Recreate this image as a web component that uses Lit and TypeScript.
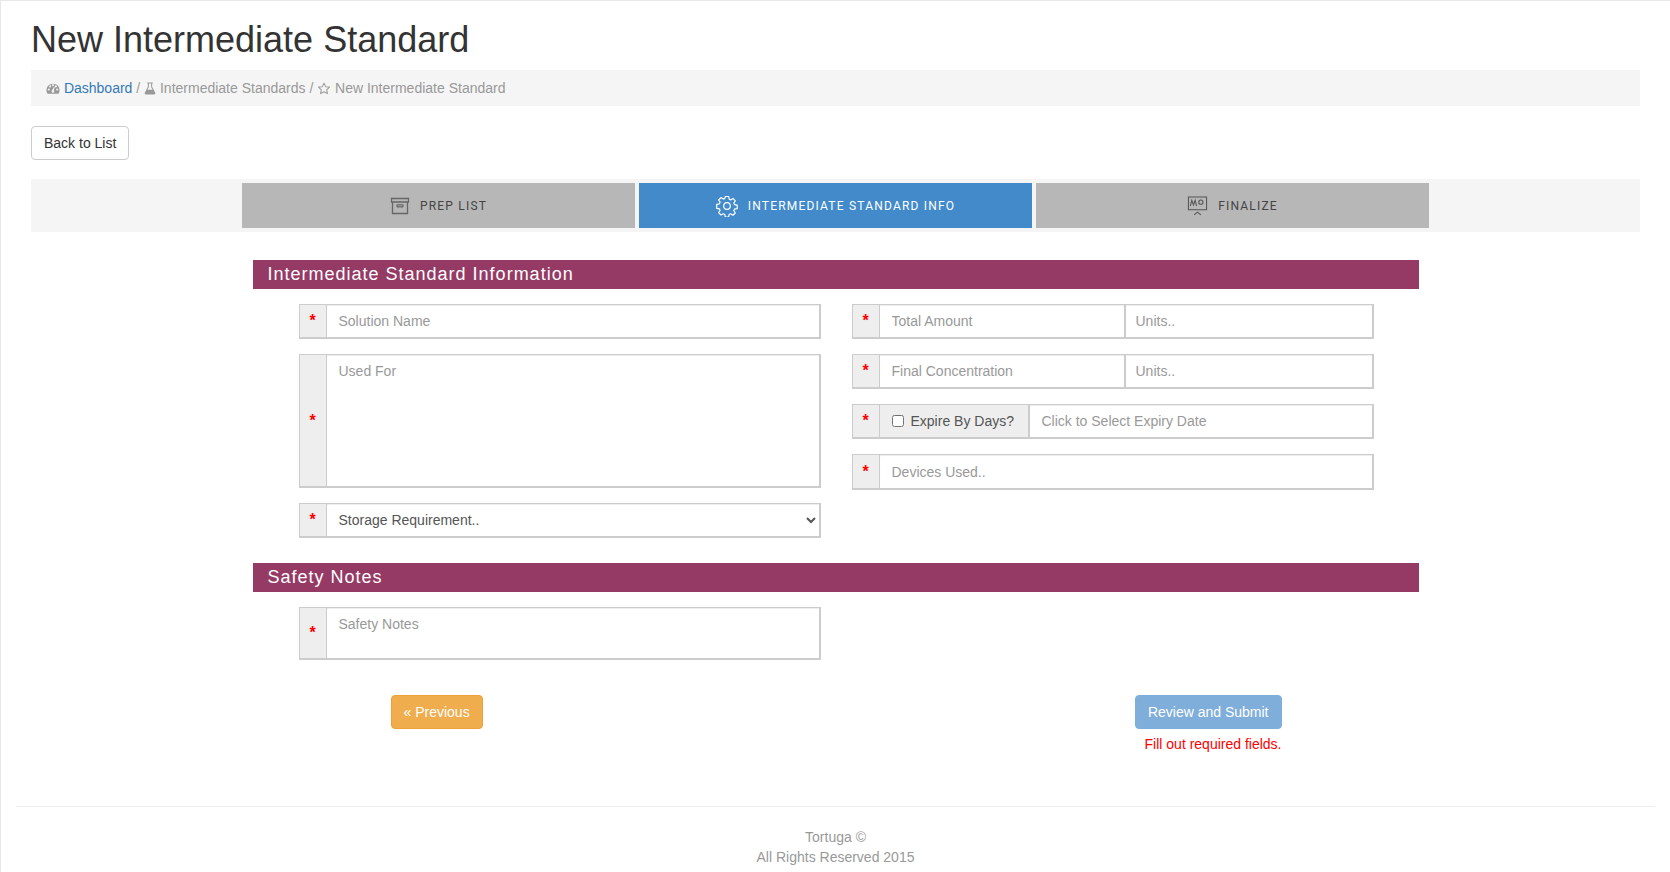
import { LitElement, css, html } from "lit";
import { customElement } from "lit/decorators.js";

const gaugeIcon = html`<svg class="crumb-icon" viewBox="0 0 16 14" width="14" height="13">
  <path fill="#999" fill-rule="evenodd" d="M8 1.5a7.5 7.5 0 0 0-6.6 11c.2.4.6.6 1 .6h11.2c.4 0 .8-.2 1-.6A7.5 7.5 0 0 0 8 1.500zM3.200 9.300a1.200 1.200 0 1 1 0-2.400 1.200 1.200 0 0 1 0 2.400zm1.600-3.500a1.200 1.200 0 1 1 0-2.400 1.200 1.200 0 0 1 0 2.400zM8 4.300a1.200 1.200 0 1 1 0-2.400 1.200 1.200 0 0 1 0 2.400zm3.200 1.500a1.200 1.200 0 1 1 0-2.400 1.200 1.200 0 0 1 0 2.400zm1.600 3.500a1.200 1.200 0 1 1 0-2.400 1.200 1.200 0 0 1 0 2.400zM9.500 10.500a1.600 1.600 0 1 1-2.300-1.700l1.900-3.800.8.300-1 4.100c.3.200.5.600.6 1.100z"/>
</svg>`;

const flaskIcon = html`<svg class="crumb-icon" viewBox="0 0 12 14" width="12" height="13">
  <path fill="#999" fill-rule="evenodd" d="M3 .5h6v1.200H8.300v3.500l3.300 6.500c.4.900-.1 1.800-1.100 1.800H1.500c-1 0-1.500-.9-1.100-1.800l3.300-6.500V1.700H3zm1.800 1.200v3.800L3.300 8.400h5.400L7.200 5.500V1.700z"/>
</svg>`;

const starIcon = html`<svg class="crumb-icon" viewBox="0 0 14 14" width="14" height="13">
  <path fill="none" stroke="#999" stroke-width="1.100" stroke-linejoin="round" d="M7 1.200l1.800 3.800 4.100.5-3 2.900.8 4.100L7 10.500l-3.700 2 .8-4.100-3-2.900 4.100-.5z"/>
</svg>`;

const boxIcon = html`<svg viewBox="0 0 20 20" width="20" height="20" fill="none" stroke="#666" stroke-width="1.300">
  <path d="M1.500 2.500h17v3.500h-17z"/>
  <path d="M2.500 6v11.500h15V6"/>
  <rect x="7" y="8.800" width="6" height="2" rx=".5"/>
</svg>`;

const gearIcon = html`<svg viewBox="0 0 22 22" width="22" height="22" fill="none" stroke="#fff" stroke-width="1.200" stroke-linejoin="round">
  <path d="M9.300 1.500h3.400l.5 2.700 1.500.7 2.300-1.500 2.300 2.400-1.500 2.200.7 1.600 2.700.6v3.400l-2.700.5-.7 1.600 1.500 2.300-2.400 2.300-2.200-1.500-1.600.7-.5 2.700H9.300l-.5-2.700-1.600-.7L5 20l-2.400-2.400 1.500-2.200-.7-1.600-2.700-.5V9.400l2.700-.6.700-1.600L2.600 5 5 2.600l2.200 1.500 1.600-.7z"/>
  <circle cx="11" cy="11" r="3.300"/>
</svg>`;

const boardIcon = html`<svg viewBox="0 0 22 22" width="21" height="21" fill="none" stroke="#555" stroke-width="1.100">
  <path d="M1.500 2h19v13.500h-19z"/>
  <path d="M3.500 11.500l1.500-6 1.800 5 1.700-5 1.500 6"/>
  <circle cx="14.500" cy="7.500" r="2.200"/>
  <path d="M11 17.500v1.200M11 18l-3.500 2.800M11 18l3.500 2.800"/>
</svg>`;

@customElement("app-root")
export class AppRoot extends LitElement {
  private required() {
    return html`<span class="addon req">*</span>`;
  }

  override render() {
    return html`
      <main class="page">
        <h1>New Intermediate Standard</h1>

        <div class="breadcrumb">
          ${gaugeIcon} <a href="#">Dashboard</a> <span>/</span> ${flaskIcon}
          <span>Intermediate Standards</span> <span>/</span> ${starIcon}
          <span>New Intermediate Standard</span>
        </div>

        <button class="btn back">Back to List</button>

        <nav class="tabs">
          <div class="tab">${boxIcon}<span>Prep List</span></div>
          <div class="tab active">${gearIcon}<span>Intermediate Standard Info</span></div>
          <div class="tab">${boardIcon}<span>Finalize</span></div>
        </nav>

        <section class="form">
          <h2>Intermediate Standard Information</h2>
          <div class="cols">
            <div class="col">
              <div class="group">
                ${this.required()}
                <input class="grow" placeholder="Solution Name" />
              </div>
              <div class="group">
                ${this.required()}
                <textarea class="grow used" placeholder="Used For"></textarea>
              </div>
              <div class="group">
                ${this.required()}
                <select class="grow">
                  <option>Storage Requirement..</option>
                </select>
              </div>
            </div>
            <div class="col">
              <div class="group">
                ${this.required()}
                <input class="half" placeholder="Total Amount" />
                <input class="units" placeholder="Units.." />
              </div>
              <div class="group">
                ${this.required()}
                <input class="half" placeholder="Final Concentration" />
                <input class="units" placeholder="Units.." />
              </div>
              <div class="group">
                ${this.required()}
                <label class="addon expire"><input type="checkbox" />Expire By Days?</label>
                <input class="grow date" placeholder="Click to Select Expiry Date" />
              </div>
              <div class="group tall">
                ${this.required()}
                <input class="grow" placeholder="Devices Used.." />
              </div>
            </div>
          </div>

          <h2 class="second">Safety Notes</h2>
          <div class="cols">
            <div class="col">
              <div class="group">
                ${this.required()}
                <textarea class="grow notes" placeholder="Safety Notes"></textarea>
              </div>
            </div>
          </div>

          <div class="cols actions">
            <div><button class="btn prev">« Previous</button></div>
            <div class="submit">
              <button class="btn review">Review and Submit</button>
              <span class="error">Fill out required fields.</span>
            </div>
          </div>
        </section>

        <footer>
          <div>Tortuga ©</div>
          <div>All Rights Reserved 2015</div>
        </footer>
      </main>
    `;
  }

  static override styles = css`
    :host {
      display: block;
      font-family: "Liberation Sans", Arial, sans-serif;
      font-size: 14px;
      line-height: 20px;
      color: #333333;
    }

    * {
      box-sizing: border-box;
    }

    .page {
      height: 872px;
      overflow: hidden;
      padding: 0 30px;
      background: #ffffff;
      border-top: 1px solid #e7e7e7;
      border-left: 1px solid #e7e7e7;
    }

    h1 {
      margin: 19px 0 10px;
      font-size: 36px;
      font-weight: 400;
      line-height: 40px;
    }

    .breadcrumb {
      height: 36px;
      margin-bottom: 20px;
      padding: 8px 15px;
      background: #f5f5f5;
      color: #999999;
    }

    .breadcrumb a {
      color: #337ab7;
      text-decoration: none;
    }

    .crumb-icon {
      vertical-align: -2px;
    }

    .btn {
      display: block;
      height: 34px;
      padding: 6px 12px;
      font: inherit;
      border: 1px solid #cccccc;
      border-radius: 4px;
      background: #ffffff;
      color: #333333;
    }

    .tabs {
      display: flex;
      justify-content: center;
      gap: 4px;
      height: 53px;
      margin-top: 19px;
      padding: 4px 0;
      background: #f5f5f5;
    }

    .tab {
      display: flex;
      align-items: center;
      justify-content: center;
      gap: 10px;
      width: 393px;
      height: 45px;
      background: #b7b7b7;
      color: #444444;
      font-family: Roboto, sans-serif;
      font-size: 12px;
      letter-spacing: 1.2px;
      text-transform: uppercase;
    }

    .tab.active {
      background: #428aca;
      color: #ffffff;
    }

    .form {
      width: 1166px;
      margin: 28px auto 0;
    }

    h2 {
      height: 29px;
      margin: 0;
      padding: 0 15px;
      background: #953a65;
      color: #ffffff;
      font-size: 18px;
      font-weight: 400;
      line-height: 28px;
      letter-spacing: 1px;
    }

    h2.second {
      margin-top: 25px;
    }

    .cols {
      display: grid;
      grid-template-columns: 522px 522px;
      gap: 31px;
      padding: 15px 45px 0 46px;
    }

    .col {
      display: flex;
      flex-direction: column;
      gap: 15px;
    }

    .group {
      display: flex;
      min-height: 34px;
      border: 2px solid #cccccc;
      border-width: 1px 2px 2px 1px;
      border-color: #cccccc;
    }

    .addon {
      display: flex;
      align-items: center;
      background: #eeeeee;
      color: #555555;
    }

    .req {
      flex: 0 0 27px;
      justify-content: center;
      color: #ff0000;
      font-size: 16px;
      font-weight: 700;
      border-right: 1px solid #cccccc;
    }

    input,
    textarea,
    select {
      font: inherit;
      color: #555555;
      border: 0;
      outline: 0;
      border-radius: 0;
      background: #ffffff;
      box-shadow: inset 0 1px 1px rgba(0, 0, 0, 0.075);
    }

    input::placeholder,
    textarea::placeholder {
      color: #999999;
      opacity: 1;
    }

    input,
    select {
      height: 32px;
    }

    input,
    textarea {
      padding: 6px 12px;
    }

    .grow {
      flex: 1 1 auto;
      min-width: 0;
    }

    select {
      padding: 0 8px;
    }

    textarea {
      display: block;
      resize: none;
    }

    .used {
      height: 131px;
    }

    .notes {
      height: 50px;
    }

    .half {
      flex: 0 0 246px;
      min-width: 0;
      border-right: 2px solid #cccccc;
    }

    .units {
      flex: 1 1 auto;
      min-width: 0;
      padding: 6px 10px;
    }

    .expire {
      flex: 0 0 150px;
      gap: 7px;
      padding-left: 12px;
      border-right: 2px solid #cccccc;
    }

    .expire input {
      width: 12px;
      height: 12px;
      margin: 0;
      padding: 0;
    }

    .tall input {
      height: 33px;
    }

    .actions {
      padding-top: 35px;
    }

    .prev {
      margin-left: 92px;
      border-color: #eea236;
      background: #f0ad4e;
      color: #ffffff;
    }

    .submit {
      display: flex;
      flex-direction: column;
      align-items: flex-end;
      padding-right: 92px;
    }

    .review {
      border-color: #7faeda;
      background: #7faeda;
      color: #ffffff;
    }

    .error {
      margin-top: 5px;
      color: #ff0000;
    }

    footer {
      margin: 52px -15px 0;
      padding-top: 20px;
      border-top: 1px solid #eeeeee;
      text-align: center;
      color: #999999;
    }
  `;
}

declare global {
  interface HTMLElementTagNameMap {
    "app-root": AppRoot;
  }
}
